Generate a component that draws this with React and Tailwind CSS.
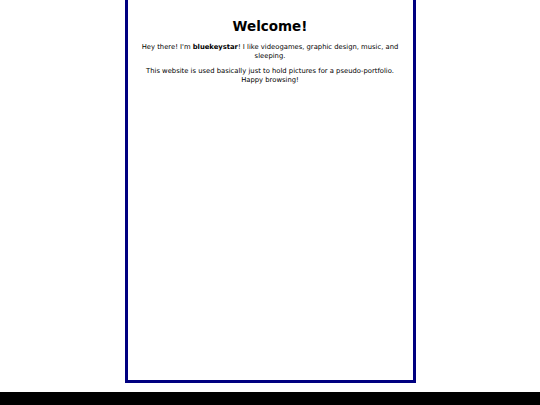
export default function App() {
  return (
    <div className="flex min-h-[405px] flex-col bg-white font-['DejaVu_Sans',sans-serif] text-black">
      <div className="mx-auto h-[383px] w-[291px] border-[3px] border-t-0 border-[#000080] px-[12px] pt-[17px] text-center">
        <h1 className="text-[13.5px] font-bold leading-[18px]">Welcome!</h1>
        <p className="mt-[8px] text-[6.8px] leading-[9px]">
          Hey there! I'm <b>bluekeystar</b>! I like videogames, graphic design, music, and sleeping.
        </p>
        <p className="mt-[6px] text-[6.8px] leading-[9px]">
          This website is used basically just to hold pictures for a pseudo-portfolio. Happy browsing!
        </p>
      </div>
      <div className="mt-[9px] h-[13px] bg-black" />
    </div>
  );
}
